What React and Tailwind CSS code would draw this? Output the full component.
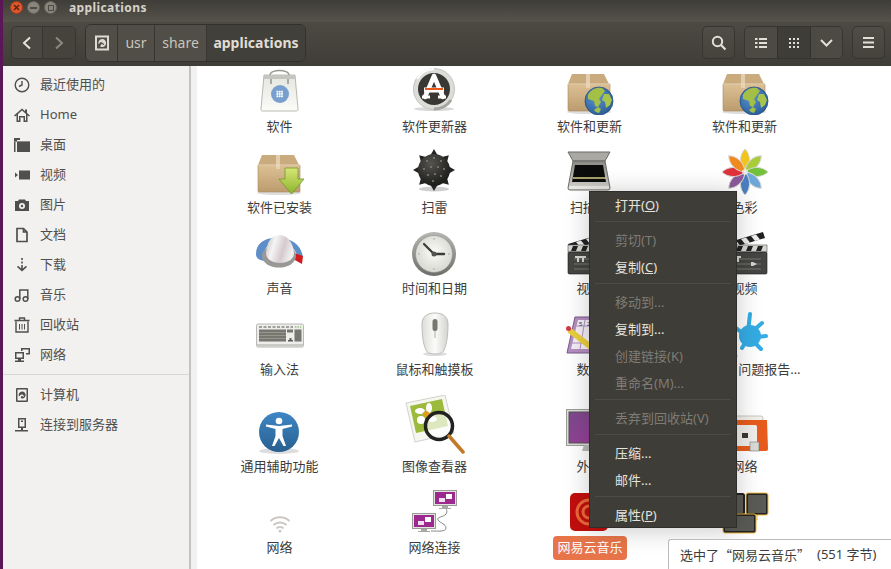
import React from 'react';

const Box = ({ children }) => (
  <svg width="48" height="48" viewBox="0 0 48 48">
    <defs>
      <linearGradient id="boxBody" x1="0" y1="0" x2="0" y2="1">
        <stop offset="0" stopColor="#dcc094" />
        <stop offset="1" stopColor="#bb9c6e" />
      </linearGradient>
    </defs>
    <ellipse cx="23" cy="45" rx="22" ry="2" fill="#00000022" />
    <path d="M6 7h32l5 10H2z" fill="#c9ab7d" />
    <path d="M2 17h42v26a1 1 0 0 1-1 1H3a1 1 0 0 1-1-1z" fill="url(#boxBody)" stroke="#a98a5e" strokeWidth=".6" />
    <rect x="20" y="7" width="4" height="14" fill="#e8d6b8" opacity=".8" />
    <path d="M2 17h42" stroke="#ecdcc0" strokeWidth="1" />
    {children}
  </svg>
);

const Globe = () => (
  <g>
    <defs>
      <radialGradient id="sea" cx=".4" cy=".35" r=".8">
        <stop offset="0" stopColor="#5b93cf" />
        <stop offset="1" stopColor="#22558f" />
      </radialGradient>
    </defs>
    <circle cx="33" cy="34" r="14" fill="url(#sea)" stroke="#234d80" strokeWidth=".8" />
    <path d="M22 28c3-6 9-8 14-7l3 3-3 4-3 4 2 3-3 5-3-1-1-5-6-2z" fill="#a3bf45" />
    <path d="M38 27l5 0 3 6-2 5-4 3-1-6-3-2z" fill="#a9c44a" />
    <path d="M28 43l4-3 3 2-2 4-3-1z" fill="#a3bf45" />
  </g>
);

const PackageGlobe = () => <Box><Globe /></Box>;

const PackageInstalled = () => (
  <Box>
    <defs>
      <linearGradient id="arrowGreen" x1="0" y1="0" x2="0" y2="1">
        <stop offset="0" stopColor="#d8e676" />
        <stop offset="1" stopColor="#8bb52d" />
      </linearGradient>
    </defs>
    <path d="M29 20h13v11h6L35.500 46 23 31h6z" fill="url(#arrowGreen)" stroke="#6f9a2a" strokeWidth=".8" />
  </Box>
);

const Bag = () => (
  <svg width="48" height="48" viewBox="0 0 48 48">
    <defs>
      <linearGradient id="bagFill" x1="0" y1="0" x2="0" y2="1">
        <stop offset="0" stopColor="#e4e6df" />
        <stop offset="1" stopColor="#fbfbf8" />
      </linearGradient>
    </defs>
    <path d="M14 13V8c0-6 19-6 19 0v5" fill="none" stroke="#9a9a94" strokeWidth="1.400" />
    <path d="M8 8h31l3 34a1.500 1.500 0 0 1-1.500 2H6.500A1.500 1.500 0 0 1 5 42z" fill="url(#bagFill)" stroke="#a8a8a2" strokeWidth=".8" />
    <path d="M8 8h31l.5 4H7.500z" fill="#c4c5bf" />
    <path d="M15 12v5M32 12v5" stroke="#8e8e88" strokeWidth="1.400" />
    <circle cx="24" cy="27" r="9" fill="#789fcd" />
    <g fill="#fff">
      {[21, 23.300, 25.600].map(x => [24.300, 26.600, 28.900].map(y => <rect key={`${x}-${y}`} x={x - 0.5} y={y - 0.5} width="1.800" height="1.800" />))}
    </g>
  </svg>
);

const Updater = () => (
  <svg width="48" height="48" viewBox="0 0 48 48">
    <ellipse cx="23" cy="42" rx="20" ry="2" fill="#00000026" />
    <circle cx="23" cy="22" r="20.500" fill="#dcdcd8" stroke="#c4c4c0" />
    <path d="M6 12A20 20 0 0 1 23 2" stroke="#fff" strokeWidth="2" fill="none" />
    <path d="M40 33A20 20 0 0 1 23 42" stroke="#a6a6a2" strokeWidth="3" fill="none" />
    <circle cx="23" cy="22" r="16" fill="#3a3835" />
    <path d="M23 9l-9 21M23 9l9 21" stroke="#fff" strokeWidth="4.500" strokeLinecap="round" />
    <path d="M11 30h8M27 30h8" stroke="#fff" strokeWidth="3" />
    <path d="M13 23h20" stroke="#fff" strokeWidth="5" />
    <path d="M14 22h18" stroke="#e9591c" strokeWidth="2" />
  </svg>
);

const Mine = () => (
  <svg width="48" height="48" viewBox="0 0 48 48">
    <defs>
      <radialGradient id="mineBall" cx=".4" cy=".3" r=".8">
        <stop offset="0" stopColor="#55544f" />
        <stop offset="1" stopColor="#131311" />
      </radialGradient>
    </defs>
    <ellipse cx="23" cy="41" rx="15" ry="2.500" fill="#00000030" />
    {[0, 45, 90, 135, 180, 225, 270, 315].map(a => (
      <path key={a} d="M19 8L23 1l4 7z" fill="#242422" transform={`rotate(${a} 23 22)`} />
    ))}
    <circle cx="23" cy="22" r="16" fill="url(#mineBall)" />
    <g fill="#7c7c78">
      {[[16, 13], [23, 10], [30, 13], [13, 21], [20, 19], [27, 19], [33, 21], [17, 27], [24, 26], [30, 28], [22, 33]].map(([x, y]) => <circle key={`${x}-${y}`} cx={x} cy={y} r="1.100" />)}
    </g>
  </svg>
);

const Scanner = () => (
  <svg width="48" height="48" viewBox="0 0 48 48">
    <defs>
      <linearGradient id="scanBody" x1="0" y1="0" x2="0" y2="1">
        <stop offset="0" stopColor="#8a8984" />
        <stop offset="1" stopColor="#d6d5d0" />
      </linearGradient>
    </defs>
    <path d="M2 4h42l-5 9H7z" fill="#a9a8a3" stroke="#6c6b67" />
    <path d="M7 13h32l5 27a2 2 0 0 1-2 2H4a2 2 0 0 1-2-2z" fill="url(#scanBody)" stroke="#6c6b67" />
    <path d="M9 17h28l3 17H6z" fill="#0c0c0c" />
    <path d="M7 30h33" stroke="#d8cf88" strokeWidth="1.500" />
    <path d="M3 38h40v3H3z" fill="#e8e7e3" />
  </svg>
);

const Flower = () => (
  <svg width="48" height="48" viewBox="0 0 48 48">
    {[['#f0c419', 0], ['#a8cc3a', 45], ['#72c13a', 90], ['#6ea8d8', 135], ['#4a7fc0', 180], ['#8a5a9a', 225], ['#e0323a', 270], ['#f08a1e', 315]].map(([c, a]) => (
      <path key={a} d="M24 24C17 16 19 6 24 1c5 5 7 15 0 23z" fill={c} transform={`rotate(${a} 24 24)`} stroke="#d8d8d4" />
    ))}
    <circle cx="24" cy="24" r="3" fill="#ffffff99" />
  </svg>
);

const Knob = () => (
  <svg width="48" height="48" viewBox="0 0 48 48">
    <defs>
      <linearGradient id="knobTop" x1="0" y1="0" x2="1" y2=".3">
        <stop offset="0" stopColor="#bdb9b9" />
        <stop offset=".35" stopColor="#f6f4f4" />
        <stop offset=".7" stopColor="#d5cace" />
        <stop offset="1" stopColor="#efeded" />
      </linearGradient>
    </defs>
    <path d="M0 25C0 14 9 8 22 9c13 0 23 6 25 19l-6-2C38 18 32 14 22 14 12 14 6 20 8 32 3 31 0 29 0 25z" fill="#5e8ec8" />
    <path d="M38 24l9 3-1 8-9-5z" fill="#d01c1c" />
    <ellipse cx="23" cy="27" rx="17" ry="11.500" fill="#9a9896" />
    <path d="M10 24C11 12 15 7 23 6c8 0 14 7 15 18 0 6-6 10-14 10-8 0-14-4-14-10z" fill="url(#knobTop)" />
  </svg>
);

const Clock = () => (
  <svg width="48" height="48" viewBox="0 0 48 48">
    <defs>
      <linearGradient id="clockRim" x1="0" y1="0" x2="0" y2="1">
        <stop offset="0" stopColor="#b6b6b2" />
        <stop offset="1" stopColor="#6d6d69" />
      </linearGradient>
      <radialGradient id="clockFace" cx=".5" cy=".45" r=".6">
        <stop offset="0" stopColor="#fafaf7" />
        <stop offset="1" stopColor="#d5d5cf" />
      </radialGradient>
    </defs>
    <circle cx="23" cy="25" r="22" fill="url(#clockRim)" />
    <circle cx="23" cy="25" r="18.500" fill="url(#clockFace)" stroke="#8c8c88" strokeWidth=".6" />
    <path d="M23 9v2M23 39v2M7 25h2M37 25h2" stroke="#aaa" />
    <path d="M23 25L13 15" stroke="#3a3a38" strokeWidth="2.200" strokeLinecap="round" />
    <path d="M23 25h10" stroke="#3a3a38" strokeWidth="2.400" strokeLinecap="round" />
    <circle cx="23" cy="25" r="2.500" fill="#55544f" />
  </svg>
);

const Clapper = () => (
  <svg width="48" height="48" viewBox="0 0 48 48">
    <path d="M2 15L42 3l2 6L4 21z" fill="#222" />
    <path d="M10 13l4 5 5-1.500-4-5zM20 10l4 5 5-1.500-4-5zM30 7l4 5 5-1.500-4-5z" fill="#eee" />
    <rect x="2" y="16" width="44" height="7" fill="#d6d6d2" stroke="#555" strokeWidth=".6" />
    <path d="M7 17h5l-2 5H5zM17 17h5l-2 5h-5zM27 17h5l-2 5h-5zM37 17h5l-2 5h-5z" fill="#222" />
    <rect x="2" y="23" width="44" height="22" rx="1.500" fill="#454543" stroke="#1d1d1c" strokeWidth=".6" />
    <path d="M8 30h32M8 35h32M8 40h32" stroke="#8a8a84" strokeWidth=".7" />
    <path d="M9 27h11v2H9zM11 29h2v4h-2zM16 29h2v4h-2zM30 33h2l4 2-4 2h-2z" fill="#d4d4d0" />
  </svg>
);

const Keyboard = () => (
  <svg width="48" height="48" viewBox="0 0 48 48">
    <rect x="0.500" y="14" width="47" height="23" rx="1.500" fill="#ededeb" stroke="#b8b8b4" />
    <path d="M1 34h46v2.500H1z" fill="#c9c9c5" />
    <path d="M3 17h34" stroke="#555" strokeWidth="1" strokeDasharray="3 1.500" />
    <path d="M39 17h6" stroke="#6fa94a" strokeWidth="1" strokeDasharray="1.500 1" />
    <rect x="3" y="19.500" width="27" height="12" fill="#77776f" />
    <path d="M3 22.500h27M3 25.500h27M3 28.500h27" stroke="#b8b8b0" strokeWidth=".5" />
    <rect x="31" y="19.500" width="6" height="3" fill="#77776f" />
    <path d="M32 30h5v1.500h-5zM33.500 28h2v2h-2z" fill="#5a5a54" />
    <rect x="38.500" y="19.500" width="7" height="12" fill="#77776f" />
  </svg>
);

const Mouse = () => (
  <svg width="48" height="48" viewBox="0 0 48 48">
    <defs>
      <linearGradient id="mouseBody" x1="0" y1="0" x2="1" y2="0">
        <stop offset="0" stopColor="#dcdcd8" />
        <stop offset=".5" stopColor="#fbfbfa" />
        <stop offset="1" stopColor="#d3d3cf" />
      </linearGradient>
    </defs>
    <ellipse cx="24" cy="44" rx="12" ry="2" fill="#00000022" />
    <path d="M11 14C11 6 17 3 24 3s13 3 13 11c0 10-1 20-4 26-1 3-5 4-9 4s-8-1-9-4c-3-6-4-16-4-26z" fill="url(#mouseBody)" stroke="#bdbdb9" />
    <path d="M24 20v8" stroke="#aaa" />
    <rect x="21.500" y="9" width="5" height="12" rx="2.500" fill="#77776f" />
  </svg>
);

const Sudoku = () => (
  <svg width="48" height="48" viewBox="0 0 48 48">
    <path d="M9 7h37l-6 36H1z" fill="#b38fc0" stroke="#7a5a8a" />
    <path d="M12 10h31l-5 29H5z" fill="#f4eff6" />
    <path d="M10.500 16h30M4 33h34M19 10l-5 29" stroke="#b38fc0" strokeWidth="1" />
    <text x="13" y="15.500" fontSize="6" fill="#444" fontFamily="Liberation Sans">5</text>
    <text x="21" y="15.500" fontSize="6" fill="#444" fontFamily="Liberation Sans">2</text>
    <path d="M3 20l22 17" stroke="#e9cf3a" strokeWidth="5.500" />
    <circle cx="2.500" cy="18.500" r="2.500" fill="#d03a4a" />
  </svg>
);

const Splash = () => (
  <svg width="48" height="48" viewBox="0 0 48 48">
    <circle cx="29" cy="26" r="11" fill="#35ace4" />
    <path d="M27 22L29 4M33 20l8-7M36 27l9-1M33 32l7 7M24 33l-3 5M20 22l-5-4" stroke="#35ace4" strokeWidth="4" strokeLinecap="round" fill="none" />
    <circle cx="15" cy="46" r="1.500" fill="#35ace4" />
  </svg>
);

const Access = () => (
  <svg width="48" height="48" viewBox="0 0 48 48">
    <defs>
      <linearGradient id="accessBlue" x1="0" y1="0" x2="0" y2="1">
        <stop offset="0" stopColor="#3f86c6" />
        <stop offset="1" stopColor="#27608f" />
      </linearGradient>
    </defs>
    <ellipse cx="23" cy="44" rx="20" ry="3" fill="#00000022" />
    <circle cx="23" cy="25" r="20" fill="url(#accessBlue)" />
    <circle cx="23" cy="14" r="3.300" fill="#fff" />
    <path d="M10 19.500l9.500 2.500v7L16 39h2.500L23 31l4.500 8H30l-3.500-10v-7l9.500-2.500v-2L23 19 10 17.500z" fill="#fff" />
  </svg>
);

const ImageViewer = () => (
  <svg width="60" height="60" viewBox="0 0 60 60">
    <path d="M1 8L40 0l9 38-39 9z" fill="#f6f6f0" stroke="#d2d2cc" />
    <path d="M5 11L37 4l6 27-32 7z" fill="#9cbb3d" />
    <g fill="#fff">
      <ellipse cx="15" cy="16" rx="5" ry="3" />
      <ellipse cx="24" cy="13" rx="3" ry="5" />
      <ellipse cx="16" cy="25" rx="4" ry="4" />
      <ellipse cx="27" cy="24" rx="5" ry="3" />
    </g>
    <circle cx="21" cy="19" r="3" fill="#e49a1e" />
    <circle cx="34" cy="31" r="13.500" fill="#ffffffaa" stroke="#222" strokeWidth="3.500" />
    <path d="M44 41l14 16" stroke="#c07a28" strokeWidth="3.500" strokeLinecap="round" />
  </svg>
);

const Monitor = () => (
  <svg width="48" height="48" viewBox="0 0 48 48">
    <defs>
      <linearGradient id="screenPurple" x1="0" y1="0" x2="1" y2="1">
        <stop offset="0" stopColor="#7a4a8a" />
        <stop offset="1" stopColor="#a23e9e" />
      </linearGradient>
    </defs>
    <rect x="0.500" y="2.500" width="47" height="36" fill="#dcdcd8" stroke="#9c9c98" />
    <rect x="3" y="5" width="42" height="31" fill="url(#screenPurple)" stroke="#555" />
    <path d="M18 38h12l2 6H16z" fill="#b8b8b4" />
  </svg>
);

const NetFolder = () => (
  <svg width="48" height="48" viewBox="0 0 48 48">
    <path d="M4 9h36a2 2 0 0 1 2 2v4H4z" fill="#f2f0ea" stroke="#c9c6bd" />
    <path d="M2 13h44l1 29a2 2 0 0 1-2 2H3a2 2 0 0 1-2-2z" fill="#e75c1c" />
    <rect x="12" y="18" width="24" height="21" rx="1.500" fill="#efeeea" />
    <rect x="21" y="26" width="6" height="5" fill="#3a3a35" />
    <rect x="29" y="35" width="9" height="9" fill="#dadad6" stroke="#777" strokeWidth=".6" />
  </svg>
);

const NetEase = () => (
  <svg width="48" height="48" viewBox="0 0 48 48">
    <rect x="4" y="5" width="38" height="38" rx="5" fill="#c20e0e" />
    <circle cx="23" cy="24" r="12" fill="none" stroke="#ea6a3a" strokeWidth="3" />
    <circle cx="23" cy="24" r="6" fill="none" stroke="#ea6a3a" strokeWidth="3" />
  </svg>
);

const Wifi = () => (
  <svg width="48" height="48" viewBox="0 0 48 48">
    <g fill="none" stroke="#c9c7c0" strokeWidth="2">
      <path d="M14.500 33a14 14 0 0 1 19 0" />
      <path d="M17.500 37a9.500 9.500 0 0 1 13 0" />
      <path d="M20.500 40.500a5 5 0 0 1 7 0" />
    </g>
    <circle cx="24" cy="43" r="1.500" fill="#c9c7c0" />
  </svg>
);

const SmallScreen = ({ x, y }) => (
  <g transform={`translate(${x} ${y})`}>
    <rect x="0.500" y="0.500" width="23" height="15" fill="#e3e3e0" stroke="#9a9a96" />
    <rect x="2" y="2" width="20" height="12" fill="#9c2a8e" />
    <rect x="13" y="4" width="6" height="5" fill="#fff" />
    <rect x="6" y="8" width="6" height="4" fill="#f0dff0" />
    <path d="M9 16h6v2h3v1H6v-1h3z" fill="#a8a8a4" />
  </g>
);

const NetConnect = () => (
  <svg width="48" height="48" viewBox="0 0 48 48">
    <path d="M35 19c0 3 2 4 0 7s-10 3-8 6 8 4 8 8-8 3-15 3" fill="none" stroke="#888" strokeWidth="1" />
    <SmallScreen x="22" y="2" />
    <SmallScreen x="1" y="25" />
  </svg>
);

const Tiles = () => (
  <svg width="48" height="48" viewBox="0 0 48 48">
    <path d="M36 26v6H20" fill="none" stroke="#f0b840" />
    <rect x="26" y="6" width="20" height="20" rx="1.500" fill="#5a5a57" stroke="#222" strokeWidth="2" />
    <rect x="25" y="5" width="22" height="22" rx="2" fill="none" stroke="#f0b840" />
    <rect x="3" y="6" width="20" height="20" rx="1.500" fill="#5a5a57" stroke="#222" strokeWidth="2" />
    <rect x="3" y="27" width="31" height="17" rx="1.500" fill="#5a5a57" stroke="#222" strokeWidth="2" />
    <rect x="2" y="26" width="33" height="19" rx="2" fill="none" stroke="#f0b840" />
  </svg>
);

const files = [
  ['软件', Bag], ['软件更新器', Updater], ['软件和更新', PackageGlobe], ['软件和更新', PackageGlobe],
  ['软件已安装', PackageInstalled], ['扫雷', Mine], ['扫描仪', Scanner], ['色彩', Flower],
  ['声音', Knob], ['时间和日期', Clock], ['视频', Clapper], ['视频', Clapper],
  ['输入法', Keyboard], ['鼠标和触摸板', Mouse], ['数独', Sudoku], ['Ubuntu 问题报告…', Splash],
  ['通用辅助功能', Access], ['图像查看器', ImageViewer], ['外观', Monitor], ['网络', NetFolder],
  ['网络', Wifi], ['网络连接', NetConnect], ['网易云音乐', NetEase, true], ['', Tiles],
];

const side = (d) => (
  <svg width="16" height="16" viewBox="0 0 16 16" fill="#4f4f4d">{d}</svg>
);

const places = [
  ['最近使用的', side(<g fill="none" stroke="#4f4f4d" strokeWidth="1.400"><circle cx="8" cy="8" r="6.800" /><path d="M8 4v4l-3 1.500" /></g>)],
  ['Home', side(<path d="M8 1.500L0 8.500l1 1 1.500-1.300V15h4v-4.500h3V15h4V8.200L15 9.500l1-1-3-2.600V2.500h-2v1.700zM4 7l4-3.500L12 7v6.500h-1V9H5v4.500H4z" />)],
  ['桌面', side(<g><path d="M0 1h6v2H3v1.500H0z" /><path d="M0 4.500h1.500V15H0z" /><path d="M3 5h13v10H3z" /><path d="M1.500 4h14.500v1H1.500z" fill="#8a8a88" /></g>)],
  ['视频', side(<path d="M5 3.500h11v9H5zM1 5.500l3 2.500-3 2.500z" />)],
  ['图片', side(<path fillRule="evenodd" d="M5 2.500h6L12 4h3v10H1V4h3zM8 6a3 3 0 1 0 0 6 3 3 0 0 0 0-6zm0 1.800a1.200 1.200 0 1 1 0 2.400 1.200 1.200 0 0 1 0-2.400z" />)],
  ['文档', side(<path fill="none" stroke="#4f4f4d" strokeWidth="1.700" d="M3 1.500h6.500L13 5v9.500H3zM9.500 1.500V5H13" />)],
  ['下载', side(<path d="M7.200 1h1.600v2H7.200zM7.200 4.500h1.600v2H7.200zM7.200 8h1.600v3.500L12 8.800l1 1.100-5 4.600-5-4.600 1-1.100 3.200 2.700z" />)],
  ['音乐', side(<g fill="none" stroke="#4f4f4d" strokeWidth="1.500"><circle cx="3.500" cy="12" r="2.300" /><circle cx="11.500" cy="12" r="2.300" /><path d="M5.800 12V3h8v9" /></g>)],
  ['回收站', side(<g fill="none" stroke="#4f4f4d" strokeWidth="1.400"><path d="M2 4.500V15h12V4.500M.500 3.500h15M5.500 3V1h5v2" /><path d="M5.500 7v5.500M8 7v5.500M10.500 7v5.500" strokeWidth="1" /></g>)],
  ['网络', side(<path fillRule="evenodd" d="M1 5h9v7H7v1.500h3V15H1v-1.500h3V12H1zm1.500 1.500v4h6v-4zM7 1h9v6.500h-4V6h2.500V2.500H8.500V4H7z" />)],
];

const devices = [
  ['计算机', side(<path fillRule="evenodd" d="M3 1h10a1 1 0 0 1 1 1v12a1 1 0 0 1-1 1H3a1 1 0 0 1-1-1V2a1 1 0 0 1 1-1zm.500 1.500v11h9v-11zM8 4.500a3.500 3.500 0 1 1-1.500 6.600l1.200-2.400 1.800 1 .7-.8-1.800-1.300L7 7.500 5 9.600A3.500 3.500 0 0 1 8 4.500z" />)],
  ['连接到服务器', side(<path fillRule="evenodd" d="M4 1h8v10H9v2h5v1.500H1V13h6v-2H4zm1.500 1.500v7h5v-7zM7 3.500h2V5H7z" />)],
];

const menu = [
  ['打开(O)', 'O', true], null,
  ['剪切(T)', 'T', false], ['复制(C)', 'C', true], null,
  ['移动到...', '', false], ['复制到...', '', true], ['创建链接(K)', 'K', false], ['重命名(M)...', 'M', false], null,
  ['丢弃到回收站(V)', 'V', false], null,
  ['压缩...', '', true], ['邮件...', '', true], null,
  ['属性(P)', 'P', true],
];

const MenuItem = ({ text, mark, on }) => {
  const i = mark ? text.lastIndexOf(mark) : -1;
  return (
    <div className={`h-[27px] pl-[25px] flex items-center whitespace-nowrap ${on ? 'text-[#e6e3dd]' : 'text-[#7e7c75]'}`}>
      {i < 0 ? text : (
        <span>{text.slice(0, i)}<span className={on ? 'underline' : ''}>{mark}</span>{text.slice(i + 1)}</span>
      )}
    </div>
  );
};

const btn = 'flex items-center justify-center bg-gradient-to-b from-[#4f4d45] to-[#45433c] border border-[#37352f]';

export default function App() {
  return (
    <div className="w-[891px] h-[569px] overflow-hidden flex relative bg-white text-[13px] font-['Noto_Sans','Noto_Sans_CJK_SC',sans-serif]">
      <div className="w-[3px] bg-[#5c1658] shrink-0" />
      <div className="flex-1 flex flex-col min-w-0">
        {/* title bar */}
        <div className="h-[22px] pb-[7px] bg-gradient-to-b from-[#3f3d38] to-[#56534b] flex items-center">
          <div className="flex items-center gap-[4px] pl-[7px]">
            <div className="w-[13px] h-[13px] rounded-full bg-[#e2562b] border border-[#a83d1c] flex items-center justify-center">
              <svg width="7" height="7" viewBox="0 0 7 7"><path d="M1 1l5 5M6 1L1 6" stroke="#4a2414" strokeWidth="1.300" /></svg>
            </div>
            <div className="w-[13px] h-[13px] rounded-full bg-[#88857c] border border-[#66635b] flex items-center justify-center">
              <div className="w-[7px] h-[2px] bg-[#4e4c45]" />
            </div>
            <div className="w-[13px] h-[13px] rounded-full bg-[#88857c] border border-[#66635b] flex items-center justify-center">
              <div className="w-[6px] h-[6px] border border-[#4e4c45]" />
            </div>
          </div>
          <div className="ml-[12px] text-[12px] font-bold tracking-[0.4px] text-[#d6d3cb]">applications</div>
        </div>
        {/* toolbar */}
        <div className="h-[44px] bg-gradient-to-b from-[#4c4a42] to-[#3f3d37] flex items-center pl-[8px] pr-[6px] pb-[3px] shrink-0">
          <div className="flex h-[33px] rounded-[5px] overflow-hidden border border-[#37352f]">
            <div className="w-[31px] flex items-center justify-center bg-[#4a4840] border-r border-[#37352f]">
              <svg width="12" height="14" viewBox="0 0 12 14"><path d="M9 1.500L3 7l6 5.500" fill="none" stroke="#e6e3dd" strokeWidth="2" /></svg>
            </div>
            <div className="w-[32px] flex items-center justify-center bg-[#45433c]">
              <svg width="12" height="14" viewBox="0 0 12 14"><path d="M3 1.500L9 7l-6 5.500" fill="none" stroke="#8c897f" strokeWidth="2" /></svg>
            </div>
          </div>
          <div className="ml-[9px] flex h-[38px] rounded-[6px] overflow-hidden border border-[#33312c] text-[#c9c6bd] text-[14px]">
            <div className="w-[32px] flex items-center justify-center bg-[#504e46] border-r border-[#37352f]">
              <svg width="14" height="16" viewBox="0 0 14 16"><path fillRule="evenodd" fill="#dedbd3" d="M0 .500h14v15H0zM2 2.500v11h10v-11zM7 4a4 4 0 1 1-1.800 7.500l1.300-2.700 2.200 1.300.8-.9-2.200-1.500L6 6.800 3.600 9.300A4 4 0 0 1 7 4z" /></svg>
            </div>
            <div className="w-[37px] flex items-center justify-center bg-[#504e46] border-r border-[#37352f]">usr</div>
            <div className="w-[52px] flex items-center justify-center bg-[#504e46] border-r border-[#37352f]">share</div>
            <div className="w-[98px] flex items-center justify-center bg-[#42403a] font-bold text-[#e0ddd5]">applications</div>
          </div>
          <div className="ml-auto flex items-center">
            <div className={`${btn} w-[33px] h-[33px] rounded-[5px]`}>
              <svg width="16" height="16" viewBox="0 0 16 16"><circle cx="6.500" cy="6.500" r="4.700" fill="none" stroke="#e2dfd7" strokeWidth="2" /><path d="M10 10l4.500 4.500" stroke="#e2dfd7" strokeWidth="2.200" /></svg>
            </div>
            <div className="ml-[9px] flex h-[33px] rounded-[5px] overflow-hidden border border-[#37352f]">
              <div className="w-[32px] flex items-center justify-center bg-[#4c4a42]">
                <svg width="12" height="10" viewBox="0 0 12 10" fill="#e2dfd7"><path d="M0 0h2.500v2H0zM4 0h8v2H4zM0 4h2.500v2H0zM4 4h8v2H4zM0 8h2.500v2H0zM4 8h8v2H4z" /></svg>
              </div>
              <div className="w-[34px] flex items-center justify-center bg-[#3f3d37] border-x border-[#33312c]">
                <svg width="10" height="10" viewBox="0 0 10 10" fill="#e2dfd7"><path d="M0 0h2v2H0zM4 0h2v2H4zM8 0h2v2H8zM0 4h2v2H0zM4 4h2v2H4zM8 4h2v2H8zM0 8h2v2H0zM4 8h2v2H4zM8 8h2v2H8z" /></svg>
              </div>
              <div className="w-[31px] flex items-center justify-center bg-[#4c4a42]">
                <svg width="13" height="8" viewBox="0 0 13 8"><path d="M1 1l5.500 5.500L12 1" fill="none" stroke="#e2dfd7" strokeWidth="2" /></svg>
              </div>
            </div>
            <div className={`${btn} ml-[9px] w-[33px] h-[33px] rounded-[5px]`}>
              <svg width="11" height="11" viewBox="0 0 11 11" fill="#e2dfd7"><path d="M0 0h11v2H0zM0 4.500h11v2H0zM0 9h11v2H0z" /></svg>
            </div>
          </div>
        </div>
        {/* body */}
        <div className="flex-1 flex min-h-0">
          <div className="w-[194px] shrink-0 bg-[#f2f1f0] flex text-[#4f4f4d]">
            <div className="w-[188px] border-r-2 border-[#c4c3c0] pt-[4px]">
              {places.map(([name, icon]) => (
                <div key={name} className="h-[30px] flex items-center pl-[11px] gap-[10px]">
                  {icon}
                  <span>{name}</span>
                </div>
              ))}
              <div className="h-[10px] flex items-center"><div className="w-full h-px -mt-[2px] bg-[#d8d7d4]" /></div>
              {devices.map(([name, icon]) => (
                <div key={name} className="h-[30px] flex items-center pl-[11px] gap-[10px]">
                  {icon}
                  <span>{name}</span>
                </div>
              ))}
            </div>
          </div>
          <div className="flex-1 pl-[6px] grid grid-cols-[repeat(4,154px)] gap-x-px grid-rows-[73px_81px_81px_81px_97px_81px] content-start text-[#3c3c3a]">
            {files.map(([name, Icon, selected], i) => (
              <div key={i} className="flex flex-col items-center justify-end">
                <Icon />
                {selected
                  ? <div className="h-6 flex items-center whitespace-nowrap"><span className="h-6 px-1 flex items-center rounded-[4px] bg-[#e8754a] text-white">{name}</span></div>
                  : <div className="h-6 pr-px flex items-center whitespace-nowrap">{name}</div>}
              </div>
            ))}
          </div>
        </div>
      </div>

      {/* context menu */}
      <div className="absolute left-[589px] top-[191px] w-[148px] h-[337px] overflow-hidden bg-[#3f3d38] border border-[#2f2e2a] shadow-[0_2px_24px_rgba(0,0,0,0.22)]">
        {menu.map((m, i) => m
          ? <MenuItem key={i} text={m[0]} mark={m[1]} on={m[2]} />
          : <div key={i} className="h-[8px] mx-[5px] pt-[2px]"><div className="h-px bg-[#4d4b45]" /></div>)}
      </div>

      {/* status bubble */}
      <div className="absolute right-0 bottom-0 w-[223px] h-[30px] bg-white border-l border-t border-[#bdbcb8] rounded-tl-[3px] pl-[11px] flex items-center text-[#3c3c3a] whitespace-nowrap">
        <span className="font-['Noto_Sans_CJK_SC',sans-serif]">选中了“网易云音乐”</span>
        <span className="ml-[7px]">(551 字节)</span>
      </div>
    </div>
  );
}
